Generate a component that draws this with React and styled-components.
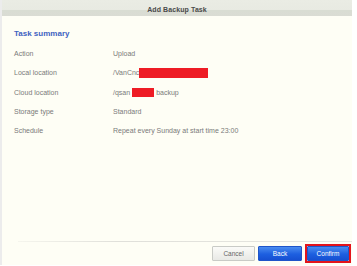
import React from "react";
import styled, { createGlobalStyle } from "styled-components";

const Global = createGlobalStyle`
  html, body { margin: 0; padding: 0; background: #ffffff; }
  body { font-family: "Liberation Sans", Arial, sans-serif; }
`;

const Dialog = styled.div`
  width: 352px;
  height: 265px;
  display: flex;
  flex-direction: column;
  background: #fefef5;
  border-left: 2px solid #ececec;
  box-sizing: border-box;
`;

const Header = styled.div`
  height: 16px;
  flex: none;
  box-sizing: border-box;
  padding-top: 3px;
  display: flex;
  align-items: center;
  justify-content: center;
  background: linear-gradient(#eaece4 0%, #e8eae2 62%, #d9ddd3 64%, #dadcd4 100%);
  font-size: 7px;
  font-weight: bold;
  color: #4a4a4a;
  letter-spacing: 0.1px;
`;

const Body = styled.div`
  flex: 1;
  padding: 12px 0 0 12px;
  display: flex;
  flex-direction: column;
`;

const SectionTitle = styled.div`
  font-size: 8px;
  font-weight: bold;
  color: #3e63c2;
  height: 12px;
  line-height: 12px;
  margin-bottom: 4px;
`;

const Row = styled.div`
  display: grid;
  grid-template-columns: 99px 1fr;
  height: 19.3px;
  align-items: center;
  font-size: 7px;
  color: #7a7a7a;
`;

const Value = styled.div`
  display: flex;
  align-items: center;
`;

const Redact = styled.span`
  display: inline-block;
  background: #ee1c25;
  width: ${(p) => p.$w}px;
  height: ${(p) => p.$h}px;
  margin-left: ${(p) => p.$ml || 0}px;
  margin-right: ${(p) => p.$mr || 0}px;
`;

const Footer = styled.div`
  flex: none;
  margin-left: 16px;
  border-top: 1px solid #e2e2dc;
  border-image: linear-gradient(to right, rgba(226,226,220,0.3), #e0e0da 30%, #e6e6e0) 1;
  padding: 2px 1px 2px 0;
  display: flex;
  justify-content: flex-end;
  align-items: center;
  gap: 3px;
`;

const Button = styled.button`
  width: ${(p) => p.$w || 44}px;
  height: 15px;
  padding: 0;
  font-family: "Liberation Sans", Arial, sans-serif;
  font-size: 6.5px;
  border-radius: 1px;
  box-sizing: border-box;
  border: 1px solid ${(p) => (p.$primary ? "#1f55c9" : "#c9cbc6")};
  color: ${(p) => (p.$primary ? "#ffffff" : "#666")};
  background: ${(p) =>
    p.$primary
      ? "linear-gradient(#4a8cf0, #1d5fe0 55%, #1650d2)"
      : "linear-gradient(#fbfbf8, #e8e9e5)"};
`;

const Highlight = styled.div`
  border: 2px solid #e3141c;
  display: flex;
`;

const rows = [
  ["Action", <>Upload</>],
  ["Local location", <>/VanCnc<Redact $w={69} $h={10} /></>],
  ["Cloud location", <>/qsan<Redact $w={22} $h={9} $ml={2} $mr={2} />backup</>],
  ["Storage type", <>Standard</>],
  ["Schedule", <>Repeat every Sunday at start time 23:00</>],
];

export default function App() {
  return (
    <>
      <Global />
      <Dialog>
        <Header>Add Backup Task</Header>
        <Body>
          <SectionTitle>Task summary</SectionTitle>
          {rows.map(([label, value]) => (
            <Row key={label}>
              <div>{label}</div>
              <Value>{value}</Value>
            </Row>
          ))}
        </Body>
        <Footer>
          <Button $w={43}>Cancel</Button>
          <Button $primary>Back</Button>
          <Highlight>
            <Button $primary $w={42}>Confirm</Button>
          </Highlight>
        </Footer>
      </Dialog>
    </>
  );
}
